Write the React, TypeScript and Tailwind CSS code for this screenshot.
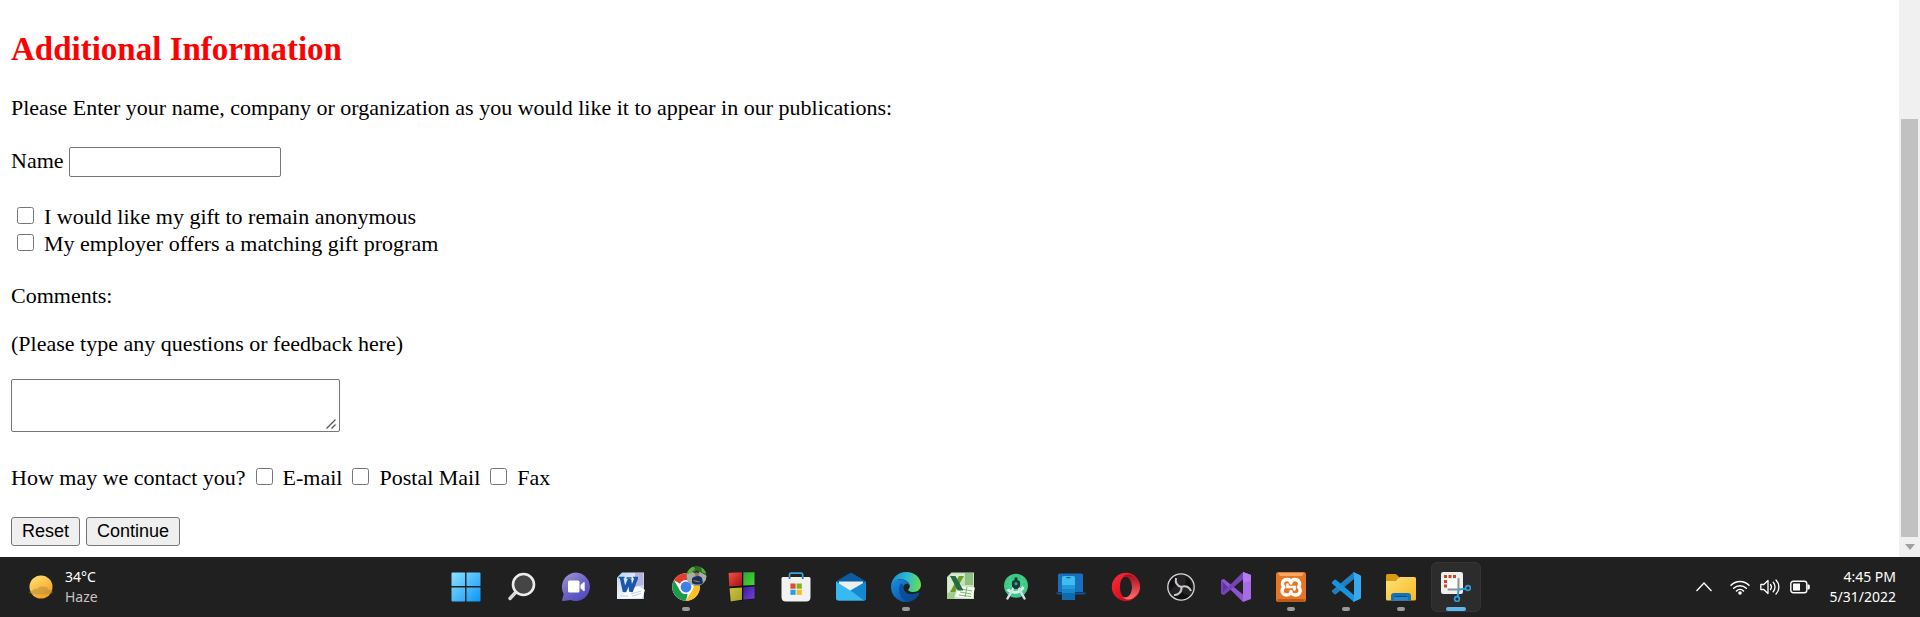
import type { ReactNode } from "react";

function StartIcon() {
  return (
    <svg viewBox="0 0 30 30" className="size-[30px]" aria-hidden="true">
      <defs>
        <linearGradient id="start" x1="0" y1="0" x2="30" y2="30" gradientUnits="userSpaceOnUse">
          <stop stopColor="#8fe4ff" />
          <stop offset="1" stopColor="#0a93f5" />
        </linearGradient>
      </defs>
      <path fill="url(#start)" d="M.5 1.5a1 1 0 0 1 1-1h12.6v13.6H.5zM15.500.5H28.500a1 1 0 0 1 1 1v12.600h-14zM.5 15.500h13.600v14H1.500a1 1 0 0 1-1-1zM15.500 15.500h14v13a1 1 0 0 1-1 1h-13z" />
    </svg>
  );
}

function SearchIcon() {
  return (
    <svg viewBox="0 0 30 30" className="size-[30px]" fill="none" aria-hidden="true">
      <path d="M10 20 4 26.500" stroke="#d8d8d8" strokeWidth="3.400" strokeLinecap="round" />
      <circle cx="17.500" cy="12.500" r="10.500" fill="#454545" stroke="#ececec" strokeWidth="2.600" />
    </svg>
  );
}

function ChatIcon() {
  return (
    <svg viewBox="0 0 30 30" className="size-[30px]" aria-hidden="true">
      <defs>
        <linearGradient id="chat" x1="5" y1="2" x2="24" y2="29" gradientUnits="userSpaceOnUse">
          <stop stopColor="#9a8fd0" />
          <stop offset=".5" stopColor="#6d63c4" />
          <stop offset="1" stopColor="#4b48c0" />
        </linearGradient>
      </defs>
      <path fill="url(#chat)" d="M15 .6a14.400 14.200 0 1 1-5.500 27.500l-7 1c-1 .1-1.600-.7-1.300-1.600l1.500-5.600A14.300 14.300 0 0 1 15 .6Z" />
      <rect x="7" y="8.500" width="11.500" height="12" rx="1.500" fill="#fff" />
      <path fill="#fff" d="m19.500 13 3-2.800c.5-.4 1.200-.2 1.200.6v7.600c0 .8-.7 1-1.200.6l-3-2.700z" />
    </svg>
  );
}

function WordIcon() {
  return (
    <svg viewBox="0 0 30 30" className="size-[30px]" aria-hidden="true">
      <defs>
        <linearGradient id="word" x1="2" y1="0" x2="26" y2="28" gradientUnits="userSpaceOnUse">
          <stop stopColor="#b8d2f1" />
          <stop offset=".5" stopColor="#e9f2fc" />
          <stop offset="1" stopColor="#a6c5ec" />
        </linearGradient>
      </defs>
      <path fill="url(#word)" d="M6 .5h22V27H1V5.500z" />
      <path fill="#b3b3dc" d="M19 1h8.500v12L19 15z" />
      <path fill="#fff" d="m10 19 12-5 7 4-3 8.500H4z" />
      <path fill="none" stroke="#a9c2e4" strokeWidth=".8" d="m15 22 10-3M16 24l9-2.500M5 24h7" />
      <path fill="none" stroke="#1b56a8" strokeWidth="3.600" strokeLinejoin="bevel" d="m5.500 5.500 3 14 5-12 1.500 12 5.500-14" />
      <path fill="none" stroke="#1b56a8" strokeWidth="1.600" d="M2.500 5.500h6M10.500 6h5M17 5.500h5" />
    </svg>
  );
}

function ChromeIcon() {
  return (
    <svg viewBox="0 0 36 36" className="-mt-1.5 ml-1.5 size-9" aria-hidden="true">
      <g transform="translate(1 7)">
        <circle cx="14" cy="14" r="13.800" fill="#fff" />
        <path fill="#e33b2e" d="M2 7.200a13.800 13.800 0 0 1 24 0H14a6.900 6.900 0 0 0-6 3.600z" />
        <path fill="#1e9b4a" d="M2 7.200 8 17.400a6.900 6.900 0 0 0 7.600 3.300L14 27.800A13.800 13.800 0 0 1 2 7.200" />
        <path fill="#fcc31e" d="M14 27.800 20 17.500A6.900 6.900 0 0 0 18.500 7.200H26A13.800 13.800 0 0 1 14 27.800" />
        <circle cx="14" cy="14" r="6.900" fill="#fff" />
        <circle cx="14" cy="14" r="5.400" fill="#3d7ee8" />
      </g>
      <clipPath id="avatar"><circle cx="25.500" cy="10" r="10" /></clipPath>
      <g clipPath="url(#avatar)">
        <path fill="#2f6b26" d="M15 0h21v20H15z" />
        <path fill="#a3afac" d="M15 8.500 21 6l4 2 4-2 7 4v11H15z" />
        <path fill="#5fae3c" d="m16 4 6-4 2 3-4 4-4 1zM30 1l6 4v3l-5-2z" />
        <path fill="#1b2f5c" d="M21 12.500c2-3 8-3.500 10-.5l1 5c-3 2-8 2-11 0z" />
        <circle cx="26" cy="8" r="2.200" fill="#9d7059" />
        <path fill="#2a2422" d="M23.800 7.300c0-3.300 4.400-3.300 4.400 0l-1-.8h-2.600z" />
        <path stroke="#a9795f" strokeWidth="1.200" d="m22.500 14.500 6 1.500" />
      </g>
    </svg>
  );
}

function CodeBlocksIcon() {
  return (
    <svg viewBox="0 0 30 30" className="size-[30px]" aria-hidden="true">
      <defs>
        <linearGradient id="cbr" x2="1" y2="1"><stop stopColor="#ef5548" /><stop offset="1" stopColor="#a40f0c" /></linearGradient>
        <linearGradient id="cbg" x2="1" y2="1"><stop stopColor="#31a530" /><stop offset="1" stopColor="#47d63b" /></linearGradient>
        <linearGradient id="cby" x2="1" y2="1"><stop stopColor="#c8c343" /><stop offset="1" stopColor="#a7a123" /></linearGradient>
        <linearGradient id="cbp" x2="1" y2="1"><stop stopColor="#3f1a9b" /><stop offset="1" stopColor="#7145dc" /></linearGradient>
      </defs>
      <path fill="#111" d="m2 0 26-.5V27L4 30z" />
      <path fill="url(#cbr)" d="m2.500.8 13.500-.6v13.500l-12.800.8z" />
      <path fill="url(#cbg)" d="M17.300.2H28.500v12.800L17.300 13.600z" />
      <path fill="url(#cby)" d="m3.500 16.300 12.500-.8v12.300L4.700 29.500z" />
      <path fill="url(#cbp)" d="m17.300 15.300 11.200-.8v12L17.300 27.800z" />
    </svg>
  );
}

function StoreIcon() {
  return (
    <svg viewBox="0 0 30 30" className="size-[30px]" aria-hidden="true">
      <path d="M8.500 6V2.800c0-1 .6-1.600 1.600-1.600h10c1 0 1.600.6 1.600 1.600V6" fill="none" stroke="#36a7da" strokeWidth="1.700" />
      <path fill="#f2f2f2" d="M.5 6.500q0-1.500 1.500-1.500h26q1.500 0 1.500 1.500v18.500q0 4.500-4.500 4.500H5Q.5 29.500.5 25z" />
      <path d="M7.600 5h1.800v2H7.600zM20.800 5h1.800v2h-1.800z" fill="#1a80b3" />
      <path fill="#e34b2c" d="M9.400 11.500h5.200v5.200H9.400z" />
      <path fill="#7bb51c" d="M15.600 11.500h5.200v5.200h-5.200z" />
      <path fill="#1da4e2" d="M9.400 17.700h5.200v5.200H9.400z" />
      <path fill="#fbb818" d="M15.600 17.700h5.200v5.200h-5.200z" />
    </svg>
  );
}

function MailIcon() {
  return (
    <svg viewBox="0 0 30 30" className="size-[30px]" aria-hidden="true">
      <path fill="#0b5d9f" d="M0 9.500 14 1q1-.6 2 0l14 8.500-4 5H4z" />
      <path fill="#eceff2" d="M3 9.500h24V20H3z" />
      <path fill="#249ddd" d="M30 9.500v17q0 2-2 2H2L15 18z" />
      <path fill="#39b9f2" d="M0 9.500 27.500 27l.5 1.500H2q-2 0-2-2z" />
      <path fill="#1588cf" d="M30 9.500 15 18.800 28 28.500q2 0 2-2z" />
    </svg>
  );
}

function EdgeIcon() {
  return (
    <svg viewBox="0 0 30 30" className="size-[30px]" aria-hidden="true">
      <defs>
        <linearGradient id="edgeTop" x1="1" y1="8" x2="29" y2="13" gradientUnits="userSpaceOnUse">
          <stop stopColor="#1b8fda" /><stop offset=".5" stopColor="#2cbad1" /><stop offset="1" stopColor="#67dd51" />
        </linearGradient>
        <linearGradient id="edgeLow" x1="2" y1="10" x2="20" y2="30" gradientUnits="userSpaceOnUse">
          <stop stopColor="#1688d9" /><stop offset="1" stopColor="#0b4d9c" />
        </linearGradient>
      </defs>
      <path fill="url(#edgeLow)" d="M0 15C0 9 5 7 10 7.500c5 .4 8 3 8.500 6-1.500-2.500-5-2.500-6 1-1.300 5 4.500 9 10.500 7.500 2-.5 4-1.600 5-1 .6.4 0 1.500-.6 2.500A15 15 0 0 1 0 15Z" />
      <path fill="#0a4791" d="M10 11c-4 6-1.500 15.500 6 18.900A15 15 0 0 0 27.400 23.500c.6-1 1.100-2 .3-2.400-8 4.500-19-1-15.200-7.600z" opacity=".75" />
      <path fill="url(#edgeTop)" d="M.1 13.500C1 5.600 7.200 0 15 0c9 0 15 6 15 12.800 0 4.600-3.500 7.200-7.500 7.200-4 0-6-1.500-5-2.700 1.800-2 1.700-4.500 0-6.600C13.500 6 4 5.500.1 13.500Z" />
    </svg>
  );
}

function ExcelIcon() {
  return (
    <svg viewBox="0 0 30 30" className="size-[30px]" aria-hidden="true">
      <path fill="#c6dfbd" d="M5.500.5H28V27H1V5z" />
      <path fill="#d9ebd1" d="M7 2h12L8 26H2V6z" />
      <path fill="#8cc181" d="M19 1h8v12h-8z" />
      <path fill="#a0cd91" d="m1 21 9-2-2 8H1z" />
      <path fill="#f5fbf1" d="m13 14 16 1.500-2.500 11L9 25z" />
      <path stroke="#73ad66" strokeWidth=".9" fill="none" d="m15 17 11 2M14 20l11 2M13 23l12 1.500M21 15l-2 10" />
      <path fill="#6e9b26" d="M13 4h5L9 20H4z" />
      <path fill="#236c3f" d="M4 4h5.500l8 14.500h-5.700z" />
    </svg>
  );
}

function AndroidStudioIcon() {
  return (
    <svg viewBox="0 0 30 30" className="size-[30px]" fill="none" aria-hidden="true">
      <circle cx="15" cy="13.800" r="12" fill="#3ac983" />
      <path stroke="#65d79e" strokeWidth=".6" d="M5 10h20M5 14h20M5 18h20M9 4v19M21 4v19" />
      <path stroke="#d9f1ea" strokeWidth="2.800" d="M6.500 17.500c5 4.500 12 4 16-2.500" />
      <path stroke="#d1dfe7" strokeWidth="2.500" strokeLinecap="round" d="m12.500 16-6 10.500M17.500 16l6 10.500" />
      <path fill="#15383a" d="M13.500 5.500h3V8l2.500 1.500v5L16.500 17h-3L11 14.500v-5L13.500 8z" />
      <circle cx="15" cy="11.700" r="1.600" fill="#35a874" />
    </svg>
  );
}

function PhoneLinkIcon() {
  return (
    <svg viewBox="0 0 30 30" className="size-[30px]" aria-hidden="true">
      <path fill="#176fbd" d="M2 3q0-1.500 1.500-1.500h22Q27 1.500 27 3v17H2z" />
      <path fill="#0d559b" d="M0 20.500h30q-.5 2-2 2H2q-1.500 0-2-2Z" />
      <path fill="#3dbdf0" d="M6 5.500Q6 4 7.500 4h10Q19 4 19 5.500V27q0 1-1 1H7q-1 0-1-1z" />
      <path fill="#239bda" d="M6 13h13v4H6z" />
      <path fill="#1687c9" d="M6 17h13v4H6z" />
      <path fill="#0d6bae" d="M6 21h13v6q0 1-1 1H7q-1 0-1-1z" />
      <path stroke="#105d91" strokeWidth="1.200" d="M10.500 5.600h4" />
    </svg>
  );
}

function OperaIcon() {
  return (
    <svg viewBox="0 0 30 30" className="size-[30px]" aria-hidden="true">
      <defs>
        <linearGradient id="opera" x2="1" y2="1"><stop stopColor="#ff2e39" /><stop offset="1" stopColor="#b60011" /></linearGradient>
        <linearGradient id="operaRight" x2="0" y2="1"><stop stopColor="#a40c1a" /><stop offset="1" stopColor="#ff6f70" /></linearGradient>
      </defs>
      <path fill="url(#opera)" fillRule="evenodd" d="M15 .8a14.200 14.200 0 1 1 0 28.400 14.200 14.200 0 0 1 0-28.400Zm0 3.700c-3.700 0-6 4.600-6 10.500s2.300 10.500 6 10.500 6-4.600 6-10.500-2.300-10.500-6-10.500Z" />
      <path fill="url(#operaRight)" d="M11.500 5c3-3 7-3.200 10-1.500 10 6 10 17 0 23-3 1.700-7 1.500-10-1.500 5 2 9.500-2.500 9.500-10S16.500 3 11.500 5Z" />
    </svg>
  );
}

function ObsIcon() {
  return (
    <svg viewBox="0 0 30 30" className="size-[30px]" aria-hidden="true">
      <circle cx="15" cy="15" r="13.200" fill="#242224" stroke="#d8d8d8" strokeWidth="1.300" />
      <path fill="#101010" d="M15 14.500C10 13 8.500 7.500 12 4 4 6 1 13 5 19c1-5 6-6 10-4.500ZM16 15c4-3 5-6 3-10 6 2 8 9 6 13-2-4-6-5-9-3ZM14.500 16c1 5-2 9-6.500 8 5 5 13 4 16-1-5 1-8-2-9.500-7Z" />
      <path fill="none" stroke="#c8c8c8" strokeWidth="2" d="M10 6c-1 5 1 8 5.500 9M25 19c-1.500-4-5.500-6-9.500-4M8 23c4 .5 8-3 7.500-8" />
    </svg>
  );
}

function VisualStudioIcon() {
  return (
    <svg viewBox="0 0 30 30" className="size-[30px]" aria-hidden="true">
      <path fill="#6334a0" d="M0 8.500 2 7l5 5v6l-5 5-2-1.500z" />
      <path fill="#8c55cf" d="M0 8.500 3 7l19 15.500V30L1.500 9.800 1.500 20.200 0 21.500z" />
      <path fill="#7544b7" d="M0 21.500V8.500l1.500 1v11L22 0v7.500L3 23z" />
      <path fill="#a66be6" d="m22 0 8 3v24l-8 3z" />
      <path fill="#b47bf0" d="m22 0 8 3v6l-8 2z" />
    </svg>
  );
}

function XamppIcon() {
  return (
    <svg viewBox="0 0 30 30" className="size-[30px]" fill="none" aria-hidden="true">
      <rect width="30" height="30" rx="2.500" fill="#e37726" />
      <path fill="#f3a868" d="M2 1h26l-2 3H4z" />
      <path fill="#b85c18" d="M1 27h28l-1 3H2z" />
      <path stroke="#fff" strokeWidth="3.300" strokeLinejoin="round" d="M11 7.500c2.500 0 4 1.500 4 3.500 0-2 1.500-3.500 4-3.500 4.500 0 6 5 3.300 7.500C26 18 24 23 19.500 23c-2.500 0-4.500-1.500-4.500-3.500 0 2-2 3.500-4.500 3.500-4.500 0-6-5-2.500-8-3-2.500-1.500-7.500 3-7.500Z" />
      <path stroke="#fff" strokeWidth="2.600" strokeLinecap="round" d="M11.500 12.500v2.500h7v2.500" />
    </svg>
  );
}

function VsCodeIcon() {
  return (
    <svg viewBox="0 0 30 30" className="size-[30px]" aria-hidden="true">
      <path fill="#1f7fc0" d="M1 19.800 3 22q1 .9 2.200 0L23 7V0L1 18.400q-.7.700 0 1.400Z" />
      <path fill="#1694df" d="M1 10.200 3 8q1-.9 2.200 0L23 23v7L1 11.600Q.3 10.900 1 10.200Z" />
      <path fill="#37a9ee" d="M22 .2q.6-.2 1 0l6 2.700q1 .5 1 1.500v21.200q0 1-1 1.500l-6 2.700q-.4.200-1 0l1-1.500V1.700z" />
    </svg>
  );
}

function ExplorerIcon() {
  return (
    <svg viewBox="0 0 30 30" className="size-[30px]" aria-hidden="true">
      <defs>
        <linearGradient id="folder" x2="1" y2="1"><stop stopColor="#ffe27a" /><stop offset="1" stopColor="#f7b91f" /></linearGradient>
      </defs>
      <path fill="#d99a11" d="M0 3.500Q0 2 1.500 2H9q1 0 1.800.8L13 5v6H0z" />
      <path fill="url(#folder)" d="M0 9h10l3-3.500q.6-.5 1.400-.5h14Q30 5 30 6.500V27q0 1.500-1.500 1.500h-27Q0 28.500 0 27z" />
      <path fill="#1273b8" d="M5 28.500V24q0-3 3-3h14q3 0 3 3v4.500z" />
      <path fill="#2a86cc" d="M8 28.500V26q0-1 1-1h12q1 0 1 1v2.500z" />
      <path stroke="#0a4d83" d="M9 24.500h12" />
    </svg>
  );
}

function SnippingIcon() {
  return (
    <svg viewBox="0 0 30 30" className="size-[30px]" fill="none" aria-hidden="true">
      <rect width="22" height="22" rx="2.200" fill="#f0efef" />
      <rect x="7" y="7" width="9" height="9" fill="#fff" />
      <path fill="#c64726" d="M3 3h3v3H3zM7.500 3h3v3h-3zM12 3h3v3h-3zM3 8h3v3H3zM3 12.500h3v3H3z" />
      <path stroke="#8d9499" strokeWidth="2" strokeLinecap="round" d="M17.500 7v11M7.500 17.500h10" />
      <path stroke="#2a9fd9" strokeWidth="2" d="m17.500 18-.8 6.500M18 17.500l6.500-.8" />
      <circle cx="16" cy="27" r="2.400" stroke="#2a9fd9" strokeWidth="1.700" />
      <circle cx="27" cy="16" r="2.400" stroke="#2a9fd9" strokeWidth="1.700" />
    </svg>
  );
}

type App = { name: string; icon: ReactNode; state?: "open" | "active" };

const apps: App[] = [
  { name: "Start", icon: <StartIcon /> },
  { name: "Search", icon: <SearchIcon /> },
  { name: "Chat", icon: <ChatIcon /> },
  { name: "Word", icon: <WordIcon /> },
  { name: "Chrome", icon: <ChromeIcon />, state: "open" },
  { name: "Code::Blocks", icon: <CodeBlocksIcon /> },
  { name: "Microsoft Store", icon: <StoreIcon /> },
  { name: "Mail", icon: <MailIcon /> },
  { name: "Edge", icon: <EdgeIcon />, state: "open" },
  { name: "Excel", icon: <ExcelIcon /> },
  { name: "Android Studio", icon: <AndroidStudioIcon /> },
  { name: "Phone Link", icon: <PhoneLinkIcon /> },
  { name: "Opera", icon: <OperaIcon /> },
  { name: "OBS Studio", icon: <ObsIcon /> },
  { name: "Visual Studio", icon: <VisualStudioIcon /> },
  { name: "XAMPP", icon: <XamppIcon />, state: "open" },
  { name: "Visual Studio Code", icon: <VsCodeIcon />, state: "open" },
  { name: "File Explorer", icon: <ExplorerIcon />, state: "open" },
  { name: "Snipping Tool", icon: <SnippingIcon />, state: "active" },
];

function TaskbarApp({ name, icon, state }: App) {
  return (
    <button
      type="button"
      aria-label={name}
      className={
        state === "active"
          ? "relative flex size-[50px] items-center justify-center rounded-md border border-[#343434] bg-[#2c2c2c]"
          : "relative flex size-[50px] items-center justify-center rounded-md"
      }
    >
      {icon}
      {state === "open" && <span className="absolute bottom-px h-1 w-2 rounded-full bg-[#9a9a9a]" />}
      {state === "active" && <span className="absolute bottom-0 h-1 w-5 rounded-full bg-[#5fb8ec]" />}
    </button>
  );
}

function Weather() {
  return (
    <div className="flex items-center gap-[11px] pl-7">
      <svg viewBox="0 0 26 26" className="size-[26px]" aria-hidden="true">
        <defs>
          <linearGradient id="sun" x1="5" y1="2" x2="20" y2="25" gradientUnits="userSpaceOnUse">
            <stop stopColor="#ffdf6e" /><stop offset="1" stopColor="#f39a1a" />
          </linearGradient>
        </defs>
        <circle cx="13" cy="13" r="11.500" fill="url(#sun)" />
        <path fill="#a98243" opacity=".45" d="M1 19q0-2 3-2 2-3 5-2 3-4 7-2 3-1 5 3 4 0 4 3l-3 1q-9 1-18 0z" />
      </svg>
      <div>
        <p className="text-white">34°C</p>
        <p className="text-[#c4c4c4]">Haze</p>
      </div>
    </div>
  );
}

function Tray() {
  return (
    <div className="flex items-center justify-end gap-2.5 pr-6 text-white">
      <svg viewBox="0 0 16 10" className="mr-2 h-2.5 w-4" fill="none" stroke="currentColor" strokeWidth="1.300" aria-hidden="true">
        <path d="m.5 9 7.500-8 7.500 8" />
      </svg>
      <svg viewBox="0 0 20 16" className="h-4 w-5" fill="none" stroke="currentColor" strokeWidth="1.500" strokeLinecap="round" aria-hidden="true">
        <path d="M1 6.300a12.700 12.700 0 0 1 18 0M3.700 9.200a9 9 0 0 1 12.600 0M6.500 12a5 5 0 0 1 7 0" />
        <circle cx="10" cy="14" r="1.800" fill="currentColor" stroke="none" />
      </svg>
      <svg viewBox="0 0 20 18" className="h-[18px] w-5" fill="none" stroke="currentColor" strokeWidth="1.300" strokeLinecap="round" strokeLinejoin="round" aria-hidden="true">
        <path d="M.8 6.500h3L8 2.500v13l-4.200-4h-3zM10.500 6.500a4 4 0 0 1 0 5M13.200 4.300a7 7 0 0 1 0 9.400M16 2a10 10 0 0 1 0 14" />
      </svg>
      <svg viewBox="0 0 20 14" className="h-3.5 w-5" fill="none" stroke="currentColor" strokeWidth="1.400" aria-hidden="true">
        <rect x=".8" y="1.200" width="16" height="11.600" rx="2.500" />
        <path fill="currentColor" stroke="none" d="M3 3.500h7v7H3zM17.500 4.500h1q1.300 0 1.300 1.300v2.400q0 1.300-1.300 1.300h-1z" />
      </svg>
      <div className="ml-2.5 text-right">
        <p>4:45 PM</p>
        <p>5/31/2022</p>
      </div>
    </div>
  );
}

function Check({ label }: { label: string }) {
  return (
    <label className="flex items-start">
      <input type="checkbox" className="mt-1 mr-2.5 ml-1.5 size-[17px]" />
      {label}
    </label>
  );
}

export default function App() {
  return (
    <div className="flex min-h-screen flex-col bg-white">
      <div className="flex flex-1">
        <main className="flex-1 px-[11px] pt-[30px] pb-[11px] font-['Liberation_Serif',serif] text-[22px] leading-[27px] text-black">
          <h2 className="text-[33px] leading-[38px] font-bold text-[#ff0000]">Additional Information</h2>
          <form>
            <p className="mt-[26px]">
              Please Enter your name, company or organization as you would like it to appear in our publications:
            </p>
            <div className="mt-[26px] flex items-start gap-[5px]">
              <label htmlFor="name">Name</label>
              <input
                id="name"
                type="text"
                className="h-[30px] w-[212px] rounded-xs border border-[#767676] px-1 font-['Liberation_Sans',sans-serif] text-lg"
              />
            </div>
            <div className="mt-[26px]">
              <Check label="I would like my gift to remain anonymous" />
              <Check label="My employer offers a matching gift program" />
            </div>
            <p className="mt-[25px]">
              <label htmlFor="comments">Comments:</label>
            </p>
            <p className="mt-[21px]">(Please type any questions or feedback here)</p>
            <div className="relative mt-[22px] w-fit">
              <textarea
                id="comments"
                className="block h-[53px] w-[329px] resize-none rounded-xs border border-[#767676] p-1 font-['Liberation_Mono',monospace] text-lg"
              />
              <svg
                viewBox="0 0 10 10"
                className="pointer-events-none absolute right-1 bottom-[3px] size-2.5"
                fill="none"
                stroke="#555"
                strokeWidth="1.300"
                aria-hidden="true"
              >
                <path d="M.5 9.500 9.500.5M5.500 9.500l4-4" />
              </svg>
            </div>
            <div className="mt-8 flex gap-1">
              <p>How may we contact you?</p>
              <Check label="E-mail" />
              <Check label="Postal Mail" />
              <Check label="Fax" />
            </div>
            <div className="mt-[26px] flex gap-1.5 font-['Liberation_Sans',sans-serif] text-lg leading-[27px]">
              <button type="reset" className="rounded-[3px] border border-[#767676] bg-[#efefef] px-2.5">Reset</button>
              <button type="button" className="rounded-[3px] border border-[#767676] bg-[#efefef] px-2.5">Continue</button>
            </div>
          </form>
        </main>
        <div className="flex w-[21px] flex-col bg-[#f0f0f0] px-0.5" aria-hidden="true">
          <div className="flex-[119]" />
          <div className="flex-[418] bg-[#c1c1c1]" />
          <div className="flex h-5 items-center justify-center">
            <svg viewBox="0 0 10 6" className="h-1.5 w-2.5" fill="#a0a0a0"><path d="M0 0h10L5 6z" /></svg>
          </div>
        </div>
      </div>
      <footer className="grid h-[60px] grid-cols-[1fr_auto_1fr] items-center bg-[#202020] font-['Noto_Sans',sans-serif] text-sm leading-5">
        <Weather />
        <nav className="flex gap-[5px] pl-px">
          {apps.map((app) => (
            <TaskbarApp key={app.name} {...app} />
          ))}
        </nav>
        <Tray />
      </footer>
    </div>
  );
}
